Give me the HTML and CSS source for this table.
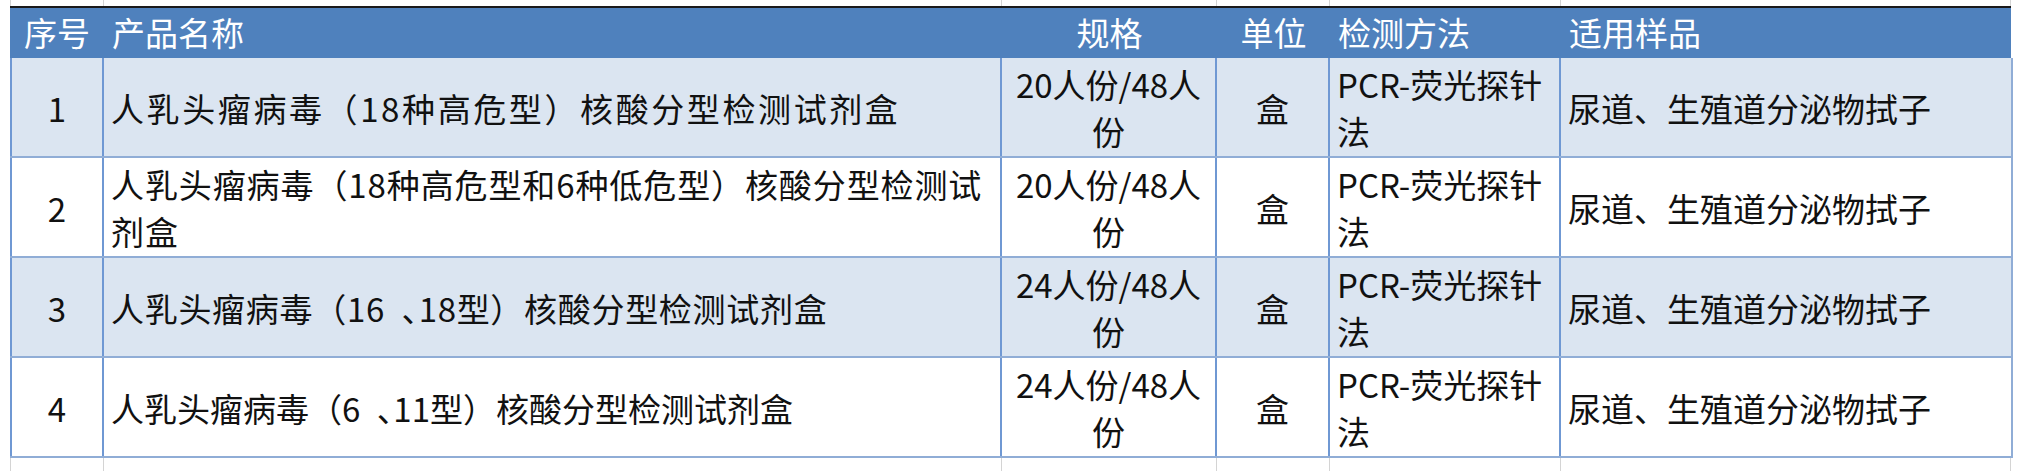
FILE: index.html
```html
<!DOCTYPE html>
<html lang="zh-CN">
<head>
<meta charset="utf-8">
<title>产品列表</title>
<link rel="stylesheet" href="styles.css">
</head>
<body>
<div class="sheet">
  <div class="row grid-row top-gap">
    <div class="gcell"></div><div class="gcell"></div><div class="gcell"></div><div class="gcell"></div><div class="gcell"></div><div class="gcell"></div>
  </div>
  <div class="row head">
    <div class="cell c">序号</div>
    <div class="cell l">产品名称</div>
    <div class="cell c">规格</div>
    <div class="cell c">单位</div>
    <div class="cell l">检测方法</div>
    <div class="cell l">适用样品</div>
  </div>
  <div class="row body odd">
    <div class="cell c"><p class="in">1</p></div>
    <div class="cell l name"><p class="in sp-a">人乳头瘤病毒（18种高危型）核酸分型检测试剂盒</p></div>
    <div class="cell c"><p class="in">20人份/48人份</p></div>
    <div class="cell c"><p class="in">盒</p></div>
    <div class="cell l"><p class="in">PCR-荧光探针法</p></div>
    <div class="cell l"><p class="in">尿道、生殖道分泌物拭子</p></div>
  </div>
  <div class="row body">
    <div class="cell c"><p class="in">2</p></div>
    <div class="cell l name"><p class="in sp-b">人乳头瘤病毒（18种高危型和6种低危型）核酸分型检测试剂盒</p></div>
    <div class="cell c"><p class="in">20人份/48人份</p></div>
    <div class="cell c"><p class="in">盒</p></div>
    <div class="cell l"><p class="in">PCR-荧光探针法</p></div>
    <div class="cell l"><p class="in">尿道、生殖道分泌物拭子</p></div>
  </div>
  <div class="row body odd">
    <div class="cell c"><p class="in">3</p></div>
    <div class="cell l name"><p class="in sp-c">人乳头瘤病毒（16<span class="dun">、</span>18型）核酸分型检测试剂盒</p></div>
    <div class="cell c"><p class="in">24人份/48人份</p></div>
    <div class="cell c"><p class="in">盒</p></div>
    <div class="cell l"><p class="in">PCR-荧光探针法</p></div>
    <div class="cell l"><p class="in">尿道、生殖道分泌物拭子</p></div>
  </div>
  <div class="row body">
    <div class="cell c"><p class="in">4</p></div>
    <div class="cell l name"><p class="in">人乳头瘤病毒（6<span class="dun">、</span>11型）核酸分型检测试剂盒</p></div>
    <div class="cell c"><p class="in">24人份/48人份</p></div>
    <div class="cell c"><p class="in">盒</p></div>
    <div class="cell l"><p class="in">PCR-荧光探针法</p></div>
    <div class="cell l"><p class="in">尿道、生殖道分泌物拭子</p></div>
  </div>
  <div class="row grid-row bottom-gap">
    <div class="gcell"></div><div class="gcell"></div><div class="gcell"></div><div class="gcell"></div><div class="gcell"></div><div class="gcell"></div>
  </div>
</div>
</body>
</html>
```

FILE: styles.css
```css
html, body {
  margin: 0;
  padding: 0;
  background: #ffffff;
}

body {
  font-family: "Noto Sans CJK SC", "Noto Sans", sans-serif;
  color: #111111;
  overflow: hidden;
}

.sheet {
  width: 2024px;
  height: 471px;
  overflow: hidden;
}

.row {
  display: grid;
  grid-template-columns: 94px 898px 215px 113px 231px 450px;
  margin-left: 10px;
  width: 2001px;
}

.grid-row .gcell {
  border-right: 1px solid #d4d4d4;
}

.grid-row .gcell:first-child {
  border-left: 1px solid #d4d4d4;
}

.top-gap {
  height: 6px;
}

.bottom-gap {
  height: 13px;
}

.head {
  height: 50px;
  background: #4f81bd;
  border-top: 2px solid #1a1a1a;
  color: #ffffff;
  font-size: 33px;
  line-height: 48px;
}

.head .cell {
  padding: 0 7px 0 8px;
  white-space: nowrap;
}

.body {
  height: 98px;
  border-bottom: 2px solid #90add6;
  border-right: 2px solid #90add6;
  font-size: 33px;
  line-height: 47px;
  background: #ffffff;
}

.body.odd {
  background: #dbe5f1;
}

.body .cell {
  display: flex;
  align-items: center;
  padding: 2px 6px 0 7px;
  border-right: 2px solid #6f98d3;
  min-width: 0;
  overflow: hidden;
}

.in {
  margin: 0;
  width: 100%;
}

.body .cell:first-child {
  border-left: 2px solid #6f98d3;
}

.body .cell:last-child {
  border-right: none;
}

.body .cell.name {
  padding-right: 2px;
}

.sp-a {
  letter-spacing: 2.6px;
}

.sp-b {
  letter-spacing: 0.9px;
}

.sp-c {
  letter-spacing: 0.7px;
}

.body .cell.c {
  text-align: center;
  padding: 2px 4px 0;
}

.head .cell.c {
  text-align: center;
  padding: 0;
}

.cell.l {
  text-align: left;
}

.dun {
  font-feature-settings: "halt" 1;
  margin-left: 0.5em;
}
```
